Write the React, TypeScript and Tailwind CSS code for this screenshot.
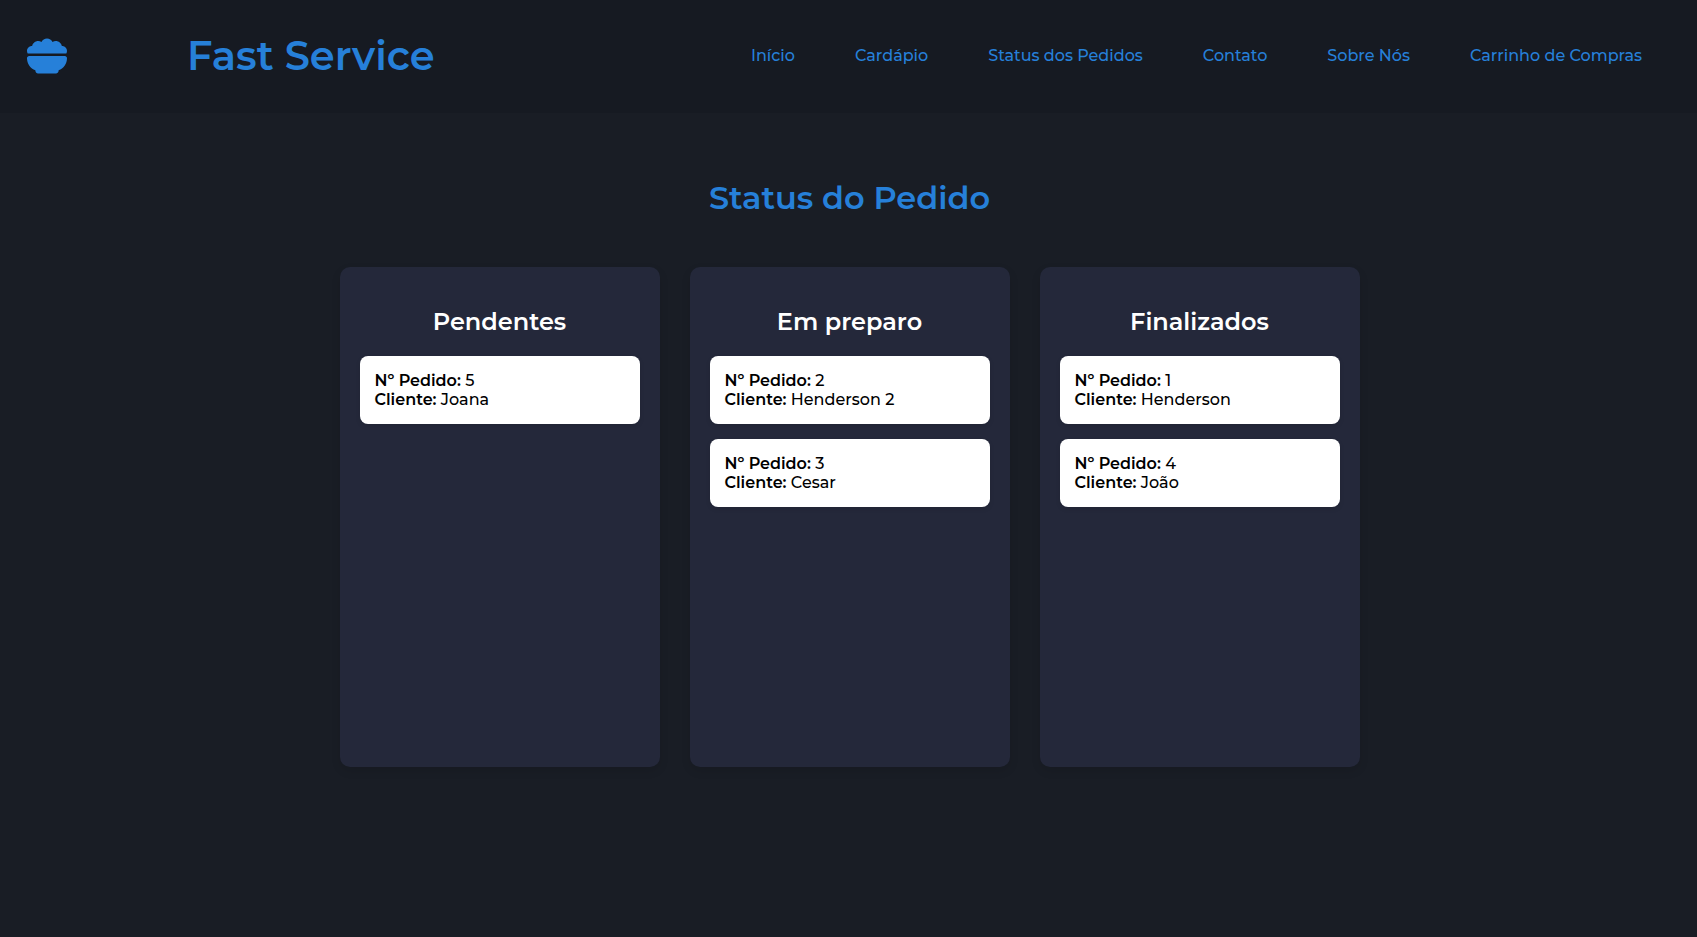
import { FaBowlFood } from "react-icons/fa6";

type Order = { id: number; client: string };
type Column = { title: string; orders: Order[] };

const links = [
  "Início",
  "Cardápio",
  "Status dos Pedidos",
  "Contato",
  "Sobre Nós",
  "Carrinho de Compras",
];

const columns: Column[] = [
  { title: "Pendentes", orders: [{ id: 5, client: "Joana" }] },
  {
    title: "Em preparo",
    orders: [
      { id: 2, client: "Henderson 2" },
      { id: 3, client: "Cesar" },
    ],
  },
  {
    title: "Finalizados",
    orders: [
      { id: 1, client: "Henderson" },
      { id: 4, client: "João" },
    ],
  },
];

function Header() {
  return (
    <header className="flex items-center bg-[#161a22] pt-[31px] pr-[55px] pb-[33px] pl-[27px] text-[#2680d9]">
      <a href="#" aria-label="Fast Service" className="mr-[120px] shrink-0">
        <FaBowlFood size={40} />
      </a>
      <p className="text-[40px] leading-[49px] font-semibold whitespace-nowrap">Fast Service</p>
      <nav className="ml-auto">
        <ul className="flex items-center gap-[60px]">
          {links.map((label) => (
            <li key={label}>
              <a href="#" className="text-base leading-5 font-medium whitespace-nowrap">
                {label}
              </a>
            </li>
          ))}
        </ul>
      </nav>
    </header>
  );
}

function OrderCard({ order }: { order: Order }) {
  return (
    <li className="rounded-lg bg-white p-[15px] text-base leading-[19px] font-medium text-black shadow-[0_2px_5px_rgba(0,0,0,0.1)]">
      <p>
        <strong className="font-semibold">Nº Pedido:</strong> {order.id}
      </p>
      <p>
        <strong className="font-semibold">Cliente:</strong> {order.client}
      </p>
    </li>
  );
}

export default function App() {
  return (
    <div className="min-h-screen bg-[#191d25] font-['Montserrat','Inter',sans-serif]">
      <Header />
      <main className="pt-[65px] pr-5 pb-10 pl-[22px]">
        <h1 className="text-center text-[32px] leading-[39px] font-semibold text-[#2680d9]">
          Status do Pedido
        </h1>
        <div className="mt-[50px] flex flex-wrap justify-center gap-[30px]">
          {columns.map((column) => (
            <section
              key={column.title}
              className="min-h-[500px] w-80 rounded-[10px] bg-[#24283a] px-5 pt-10 pb-5 shadow-[0_4px_10px_rgba(0,0,0,0.1)]"
            >
              <h2 className="mb-5 text-center text-2xl leading-[29px] font-semibold text-white">
                {column.title}
              </h2>
              <ul className="flex flex-col gap-[15px]">
                {column.orders.map((order) => (
                  <OrderCard key={order.id} order={order} />
                ))}
              </ul>
            </section>
          ))}
        </div>
      </main>
    </div>
  );
}
